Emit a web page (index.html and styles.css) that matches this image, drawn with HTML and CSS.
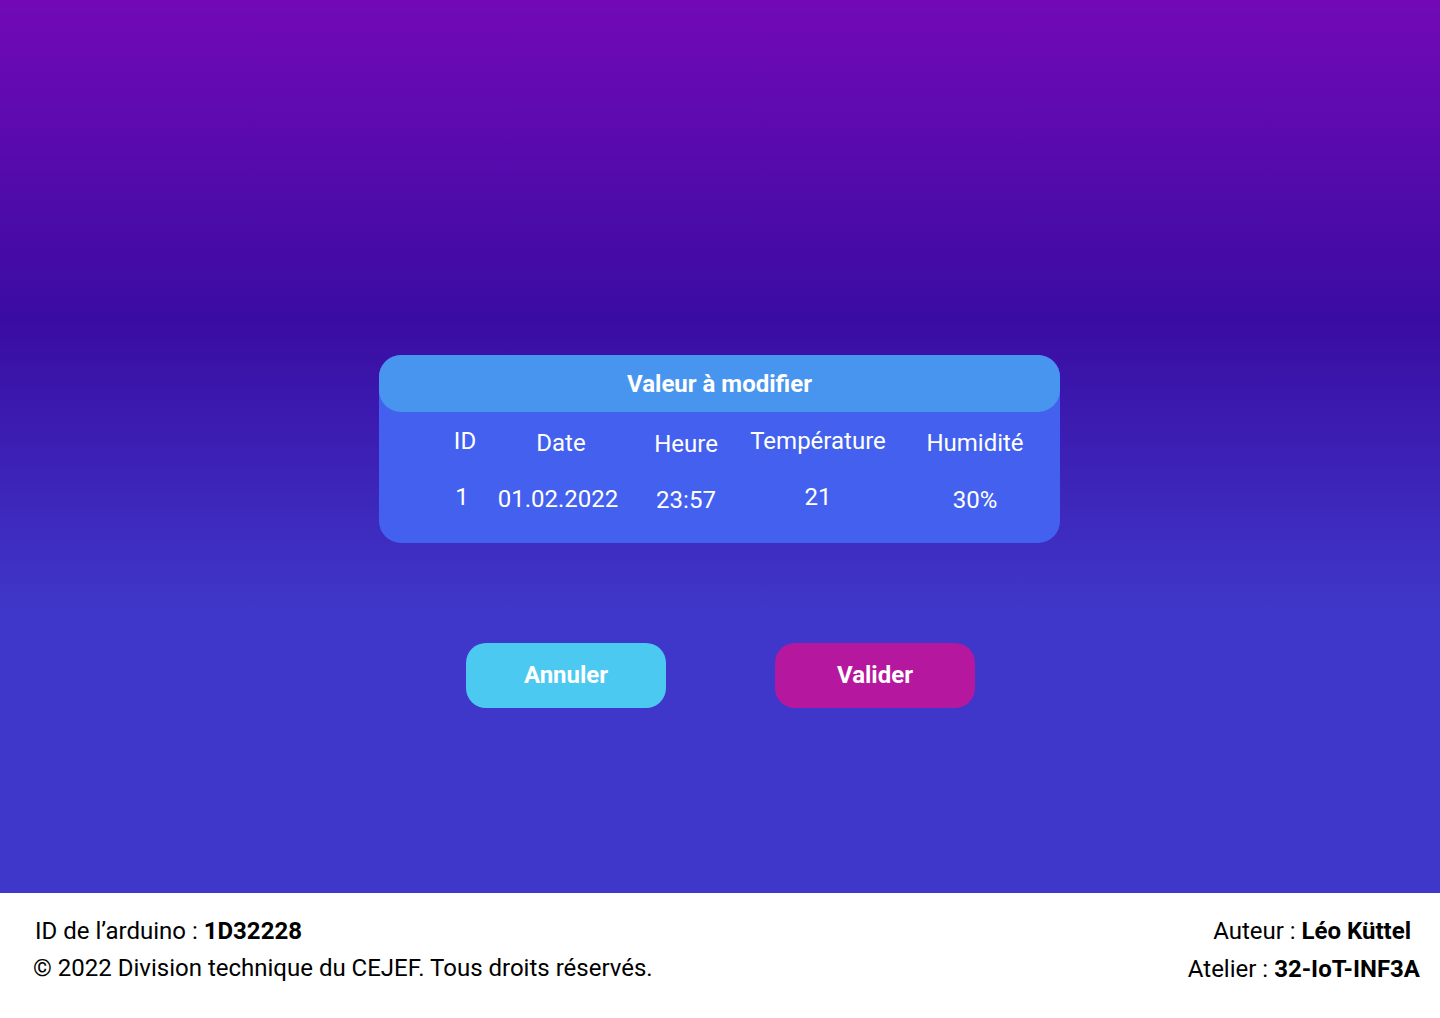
FILE: index.html
```html
<!DOCTYPE html>
<html lang="fr">
<head>
<meta charset="utf-8">
<title>Valeur à modifier</title>
<link rel="stylesheet" href="styles.css">
</head>
<body>
<main class="stage">
  <section class="card">
    <h1 class="card-title">Valeur à modifier</h1>
    <div class="grid">
      <div class="cell c-id h1">ID</div>
      <div class="cell c-date h2">Date</div>
      <div class="cell c-heure h3">Heure</div>
      <div class="cell c-temp h1">Température</div>
      <div class="cell c-hum h2">Humidité</div>
      <div class="cell c-id d1">1</div>
      <div class="cell c-date d2">01.02.2022</div>
      <div class="cell c-heure d3">23:57</div>
      <div class="cell c-temp d1">21</div>
      <div class="cell c-hum d3">30%</div>
    </div>
  </section>
  <div class="actions">
    <button class="btn btn-cancel">Annuler</button>
    <button class="btn btn-ok">Valider</button>
  </div>
</main>
<footer class="footer">
  <div class="foot-left">
    <p class="line l1">ID de l’arduino : <b>1D32228</b></p>
    <p class="line l2">© 2022 Division technique du CEJEF. Tous droits réservés.</p>
  </div>
  <div class="foot-right">
    <p class="line r1">Auteur : <b>Léo Küttel</b></p>
    <p class="line r2">Atelier : <b>32-IoT-INF3A</b></p>
  </div>
</footer>
</body>
</html>
```
FILE: styles.css
```css
* { box-sizing: border-box; }
html, body { margin: 0; padding: 0; }
body {
  font-family: Roboto, "Liberation Sans", sans-serif;
  width: 1440px;
  height: 1018px;
  overflow: hidden;
  background: #fff;
}
.stage {
  height: 893px;
  background: linear-gradient(180deg, #7209b7 0px, #3a0ca3 320px, #3f37c9 610px, #3f37c9 893px);
  display: flex;
  flex-direction: column;
  align-items: center;
  padding-top: 355px;
}
.card {
  width: 681px;
  height: 188px;
  margin-right: 1px;
  background: #4361ee;
  border-radius: 22px;
  color: #fff;
}
.card-title {
  margin: 0;
  height: 57px;
  background: #4895ef;
  border-radius: 22px;
  font-size: 24px;
  font-weight: 700;
  display: flex;
  align-items: center;
  justify-content: center;
  padding-top: 1px;
}
.grid {
  display: grid;
  grid-template-columns: 52px 140px 110px 154px 160px;
  grid-template-rows: 28px 28px;
  row-gap: 28px;
  padding: 16px 0 0 60px;
  font-size: 24px;
}
.cell { text-align: center; line-height: 28px; }
.h1 { translate: 0 -1px; }
.h2 { translate: 0 1px; }
.h3 { translate: 0 2px; }
.d1 { translate: 0 -1px; }
.d2 { translate: 0 1px; }
.d3 { translate: 0 2px; }
.c-id.d1 { translate: -3px -1px; }
.c-date.d2 { translate: -3px 1px; }
.actions {
  margin-top: 100px;
  display: flex;
  gap: 109px;
  margin-left: 1px;
}
.btn {
  width: 200px;
  height: 65px;
  border: none;
  border-radius: 20px;
  color: #fff;
  font-family: Roboto, "Liberation Sans", sans-serif;
  font-size: 24px;
  font-weight: 700;
  padding: 0 0 2px;
}
.btn-cancel { background: #4cc9f0; }
.btn-ok { background: #b5179e; }
.footer {
  height: 125px;
  display: flex;
  justify-content: space-between;
  padding: 20px 20px 0 33px;
  font-size: 24px;
  color: #000;
}
.line { margin: 0; line-height: 37px; white-space: nowrap; }
.l1 { padding-left: 2px; }
.foot-right { text-align: right; }
.r1 { padding-right: 9px; }
.r2 { line-height: 39px; }
.line b { font-weight: 700; }
```
